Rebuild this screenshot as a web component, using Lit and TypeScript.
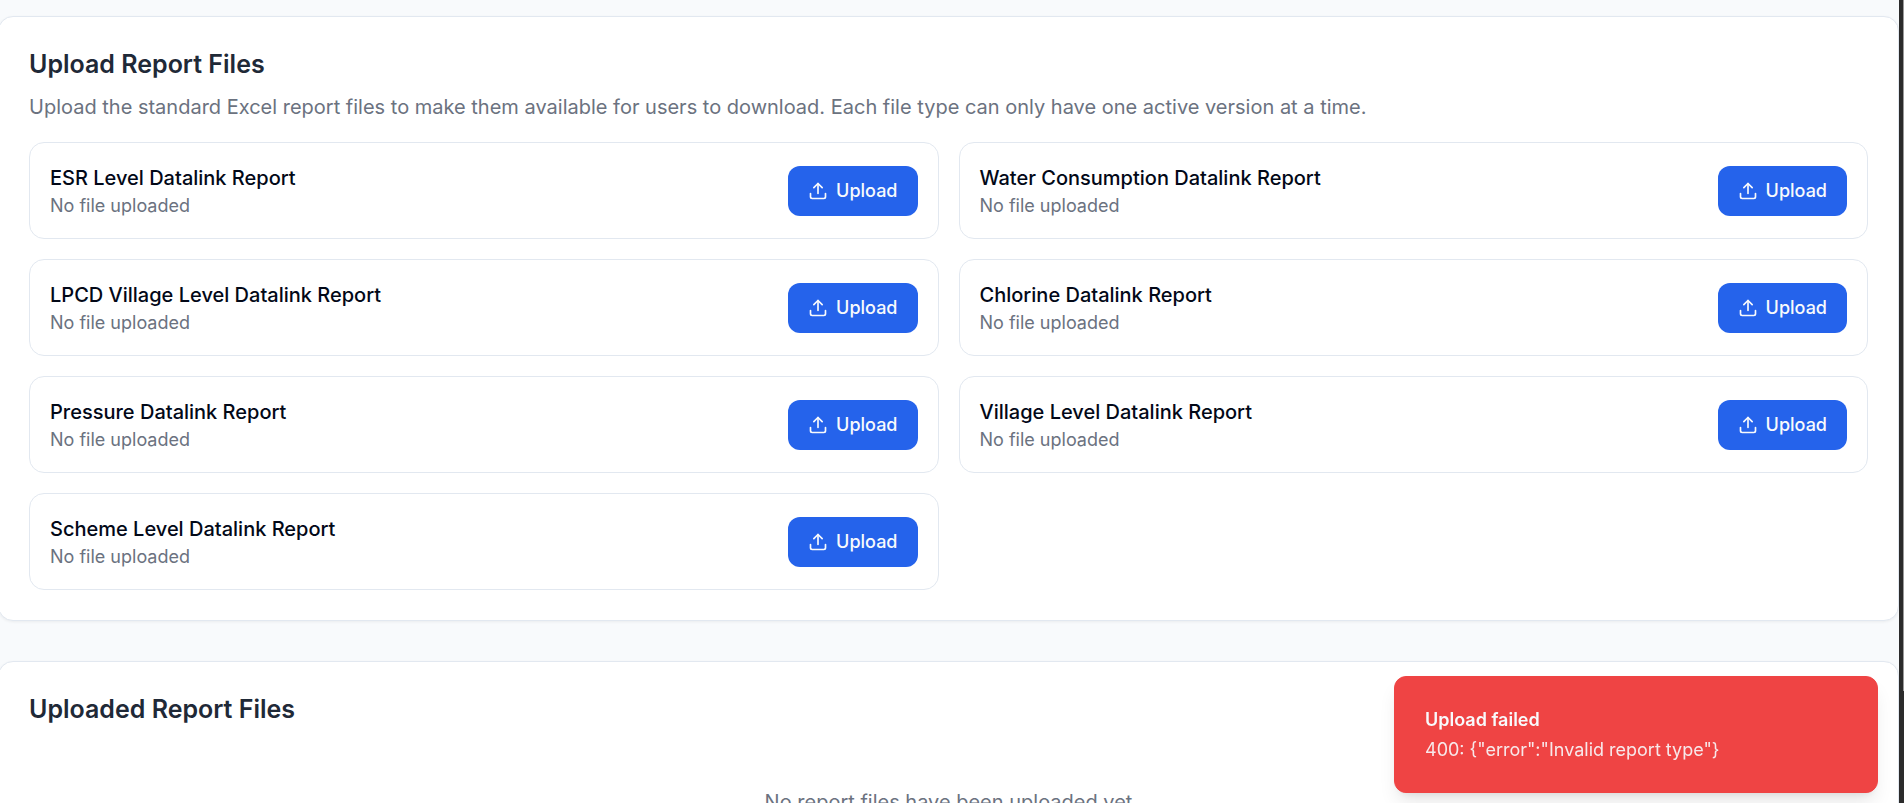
import { LitElement, html, css } from "lit";
import { customElement, property } from "lit/decorators.js";

const REPORTS = [
  "ESR Level Datalink Report",
  "Water Consumption Datalink Report",
  "LPCD Village Level Datalink Report",
  "Chlorine Datalink Report",
  "Pressure Datalink Report",
  "Village Level Datalink Report",
  "Scheme Level Datalink Report",
];

@customElement("report-item")
class ReportItem extends LitElement {
  @property() name = "";

  static styles = css`
    :host {
      display: flex;
      align-items: center;
      justify-content: space-between;
      gap: 20px;
      padding: 20px;
      border: 1px solid #e2e8f0;
      border-radius: 15px;
    }
    .name {
      margin: 0;
      font-size: 20px;
      line-height: 30px;
      font-weight: 500;
      color: #020817;
    }
    .status {
      margin: 0;
      font-size: 18px;
      line-height: 25px;
      color: #6b7280;
    }
    .upload {
      display: inline-flex;
      align-items: center;
      gap: 8px;
      height: 50px;
      padding: 0 20px;
      border: 0;
      border-radius: 12px;
      background: #2563eb;
      color: #f8fafc;
      font: inherit;
      font-size: 18px;
      line-height: 25px;
      font-weight: 500;
      cursor: pointer;
    }
    .icon {
      display: block;
      width: 20px;
      height: 20px;
    }
  `;

  render() {
    return html`
      <div>
        <h3 class="name">${this.name}</h3>
        <p class="status">No file uploaded</p>
      </div>
      <button class="upload" type="button">
        <svg class="icon" viewBox="0 0 24 24" fill="none" stroke="currentColor" stroke-width="2"
          stroke-linecap="round" stroke-linejoin="round" aria-hidden="true">
          <path d="M21 15v4a2 2 0 0 1-2 2H5a2 2 0 0 1-2-2v-4" />
          <path d="m17 8-5-5-5 5" />
          <path d="M12 3v12" />
        </svg>
        Upload
      </button>
    `;
  }
}

@customElement("app-root")
class AppRoot extends LitElement {
  static styles = css`
    :host {
      display: flex;
      height: 100vh;
      overflow: hidden;
      font-family: Inter, sans-serif;
      background: #f8fafc;
    }
    .page {
      flex: 1;
      min-width: 0;
      display: flex;
      flex-direction: column;
      gap: 40px;
      margin-left: -2px;
      padding-top: 16px;
    }
    .edge {
      flex: none;
      display: flex;
      justify-content: flex-end;
      width: 5px;
      background: #2b2b2b;
    }
    .thumb {
      width: 1px;
      height: 86%;
      background: #9a9a9a;
    }
    .card {
      padding: 30px;
      border: 1px solid #e2e8f0;
      border-radius: 15px;
      background: #fff;
      box-shadow: 0 1px 3px rgba(0, 0, 0, 0.06);
    }
    .title {
      margin: 0;
      font-size: 25px;
      line-height: 35px;
      font-weight: 600;
      color: #1f2937;
    }
    .text {
      margin: 10px 0 20px;
      font-size: 20px;
      line-height: 30px;
      color: #6b7280;
    }
    .grid {
      display: grid;
      grid-template-columns: repeat(2, minmax(0, 1fr));
      gap: 20px;
    }
    .empty {
      margin: 0;
      padding: 60px 0 40px;
      font-size: 20px;
      line-height: 30px;
      text-align: center;
      color: #6b7280;
    }
    .toast {
      position: fixed;
      right: 26px;
      bottom: 10px;
      box-sizing: border-box;
      width: 484px;
      max-width: calc(100vw - 52px);
      display: grid;
      gap: 5px;
      padding: 30px;
      border: 1px solid #ef4444;
      border-radius: 12px;
      background: #ef4444;
      color: #f8fafc;
      font-size: 18px;
      line-height: 25px;
      box-shadow: 0 12px 19px -4px rgba(0, 0, 0, 0.1), 0 5px 8px -5px rgba(0, 0, 0, 0.1);
    }
    .toast-title {
      font-weight: 600;
    }
    .toast-text {
      opacity: 0.9;
    }
  `;

  render() {
    return html`
      <main class="page">
        <section class="card">
          <h2 class="title">Upload Report Files</h2>
          <p class="text">
            Upload the standard Excel report files to make them available for users to download. Each file type can
            only have one active version at a time.
          </p>
          <div class="grid">${REPORTS.map((name) => html`<report-item .name=${name}></report-item>`)}</div>
        </section>
        <section class="card">
          <h2 class="title">Uploaded Report Files</h2>
          <p class="empty">No report files have been uploaded yet</p>
        </section>
      </main>
      <div class="edge"><div class="thumb"></div></div>
      <div class="toast" role="alert">
        <div class="toast-title">Upload failed</div>
        <div class="toast-text">400: {"error":"Invalid report type"}</div>
      </div>
    `;
  }
}
